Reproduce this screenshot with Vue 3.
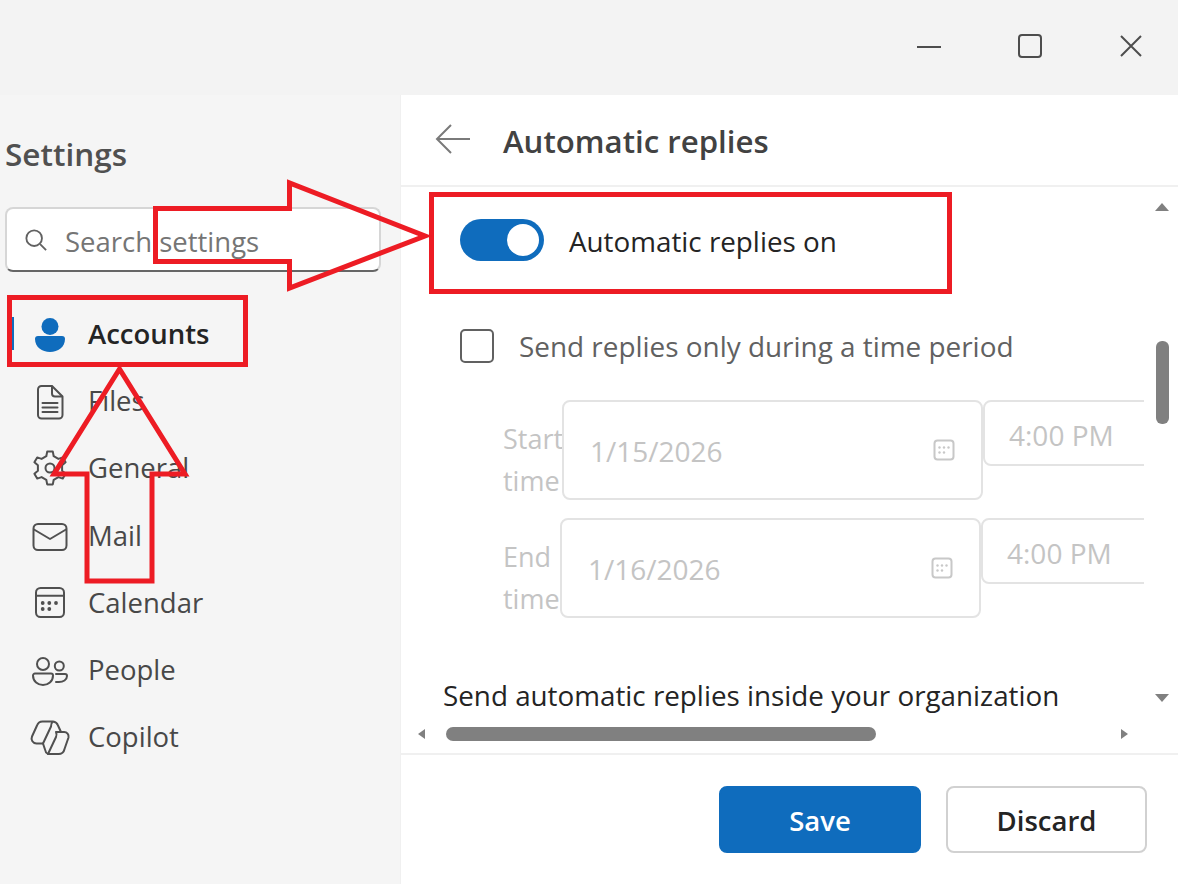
<script setup>
const navItems = [
  { id: "accounts", label: "Accounts" },
  { id: "files", label: "Files" },
  { id: "general", label: "General" },
  { id: "mail", label: "Mail" },
  { id: "calendar", label: "Calendar" },
  { id: "people", label: "People" },
  { id: "copilot", label: "Copilot" },
];

const dateRows = [
  { label: "Start time", date: "1/15/2026", time: "4:00 PM", labelWidth: 59 },
  { label: "End time", date: "1/16/2026", time: "4:00 PM", labelWidth: 57 },
];

// gear outline, six rounded teeth
function gearPath() {
  const pts = [];
  for (let i = 0; i < 6; i++) {
    const a = (Math.PI / 3) * i - Math.PI / 2;
    const teeth = [
      [-0.3, 12.4],
      [-0.17, 16.6],
      [0.17, 16.6],
      [0.3, 12.4],
    ];
    for (const [off, r] of teeth) {
      pts.push(
        (18 + r * Math.cos(a + off)).toFixed(1) + " " + (18 + r * Math.sin(a + off)).toFixed(1)
      );
    }
  }
  return "M" + pts.join("L") + "Z";
}
const gear = gearPath();
</script>

<template>
  <div class="window">
    <header class="titlebar">
      <svg class="win-icon" viewBox="0 0 26 26"><path d="M1 14h24" /></svg>
      <svg class="win-icon" viewBox="0 0 26 26"><rect x="2" y="2" width="22" height="22" rx="3" /></svg>
      <svg class="win-icon" viewBox="0 0 26 26"><path d="M3 3l20 20M23 3L3 23" /></svg>
    </header>

    <div class="body">
      <aside class="sidebar">
        <h1 class="settings-title">Settings</h1>
        <div class="search">
          <svg class="search-icon" viewBox="0 0 24 24">
            <circle cx="10" cy="10" r="8.5" />
            <path d="M16.5 16.5L23 23" />
          </svg>
          <span class="search-text">Search settings</span>
        </div>

        <nav class="nav">
          <div
            v-for="item in navItems"
            :key="item.id"
            class="nav-item"
            :class="{ active: item.id === 'accounts' }"
          >
            <span v-if="item.id === 'accounts'" class="indicator"></span>
            <svg class="nav-icon" viewBox="0 0 36 36">
              <g v-if="item.id === 'accounts'" class="filled">
                <circle cx="18" cy="10.500" r="8.500" />
                <path d="M3 23a3 3 0 0 1 3-3h24a3 3 0 0 1 3 3c0 8-7 13-15 13S3 31 3 23z" />
              </g>
              <g v-else-if="item.id === 'files'">
                <path d="M9.500 3h10.500l10.500 10.500v18.500a3.500 3.500 0 0 1-3.500 3.500h-17.500a3.500 3.500 0 0 1-3.500-3.500v-25.500a3.500 3.500 0 0 1 3.500-3.500z" />
                <path d="M20 3.500v7a3 3 0 0 0 3 3h7M10.500 20h15M10.500 24.500h15M10.500 29h15" />
              </g>
              <g v-else-if="item.id === 'general'">
                <path :d="gear" />
                <circle cx="18" cy="18" r="4.500" />
              </g>
              <g v-else-if="item.id === 'mail'">
                <rect x="1.500" y="7" width="33" height="26" rx="4.500" />
                <path d="M2 12.500l16 9.500 16-9.500" />
              </g>
              <g v-else-if="item.id === 'calendar'">
                <rect x="4" y="4" width="28" height="29" rx="4.500" />
                <path d="M4 11.700h28" />
                <g class="filled">
                  <circle cx="10.700" cy="19" r="1.900" />
                  <circle cx="17.300" cy="19" r="1.900" />
                  <circle cx="24" cy="19" r="1.900" />
                  <circle cx="10.700" cy="25" r="1.900" />
                  <circle cx="17.300" cy="25" r="1.900" />
                </g>
              </g>
              <g v-else-if="item.id === 'people'">
                <circle cx="11" cy="12" r="6" />
                <circle cx="27.300" cy="14" r="4.500" />
                <path d="M3 21.500h16a2 2 0 0 1 2 2c0 6-5 9.500-10 9.500s-10-3.500-10-9.500a2 2 0 0 1 2-2z" />
                <path d="M24 22h9a2 2 0 0 1 2 2c0 4-4 6-8 6h-3" />
              </g>
              <g v-else>
                <path d="M21 2.500H11a6 6 0 0 0-6 4L0 17.500a5 5 0 0 0 4.500 7H11l8-17a6 6 0 0 1 2-5a6 6 0 0 1 5 4L29 13" />
                <path d="M24 13h8a4.500 4.500 0 0 1 4.500 5.500L32.500 30a6 6 0 0 1-6 5H16l8-17a6 6 0 0 0 0-5" />
                <path d="M11 24.500l2 6a6 6 0 0 0 3 4.500" />
              </g>
            </svg>
            <span class="nav-label">{{ item.label }}</span>
          </div>
        </nav>
      </aside>

      <main class="pane">
        <div class="pane-head">
          <svg class="back" viewBox="0 0 36 32">
            <path d="M35 16H2M16 2L2 16l14 14" />
          </svg>
          <h2 class="pane-title">Automatic replies</h2>
        </div>

        <div class="scroll-area">
          <div class="scroll-col">
            <div class="viewport">
              <div class="toggle-row">
                <span class="toggle"><span class="knob"></span></span>
                <span class="toggle-label">Automatic replies on</span>
              </div>

              <div class="check-row">
                <span class="checkbox"></span>
                <span class="check-label">Send replies only during a time period</span>
              </div>

              <div v-for="row in dateRows" :key="row.label" class="date-row">
                <span class="date-label" :style="{ width: row.labelWidth + 'px' }">{{ row.label }}</span>
                <div class="date-input">
                  <span>{{ row.date }}</span>
                  <svg class="date-icon" viewBox="0 0 22 22">
                    <rect x="1.500" y="1.500" width="19" height="19" rx="3" />
                    <g class="dots">
                      <circle cx="6.500" cy="8.500" r="1.200" />
                      <circle cx="11" cy="8.500" r="1.200" />
                      <circle cx="15.500" cy="8.500" r="1.200" />
                      <circle cx="6.500" cy="13.500" r="1.200" />
                      <circle cx="11" cy="13.500" r="1.200" />
                    </g>
                  </svg>
                </div>
                <div class="time-input">{{ row.time }}</div>
              </div>

              <div class="section-title">Send automatic replies inside your organization</div>
            </div>

            <div class="hbar">
              <span class="arrow arrow-left"></span>
              <span class="hthumb"></span>
              <span class="arrow arrow-right"></span>
            </div>
          </div>

          <div class="vbar">
            <span class="arrow arrow-up"></span>
            <span class="vthumb"></span>
            <span class="arrow arrow-down"></span>
          </div>
        </div>

        <footer class="pane-foot">
          <button class="btn btn-primary">Save</button>
          <button class="btn">Discard</button>
        </footer>
      </main>
    </div>

    <!-- annotations drawn over the screenshot -->
    <svg class="marks" viewBox="0 0 1178 884">
      <rect x="431.500" y="194.500" width="518" height="97" />
      <rect x="9.500" y="297.500" width="236" height="67" />
      <path d="M155.500 208.500H289.500V183L425 236 289.500 288V261.500H155.500Z" />
      <path d="M119.500 369L54 474H87V581H152V474H185Z" />
    </svg>
  </div>
</template>

<style scoped>
.window {
  position: relative;
  width: 1178px;
  height: 884px;
  overflow: hidden;
  display: flex;
  flex-direction: column;
  background: #f3f3f3;
  font-family: "Open Sans", "Noto Sans", sans-serif;
  color: #424242;
}

.titlebar {
  height: 95px;
  flex: none;
  display: flex;
  justify-content: flex-end;
  align-items: center;
  gap: 75px;
  padding: 0 34px 3px 0;
  box-sizing: border-box;
}

.win-icon {
  width: 26px;
  height: 26px;
  fill: none;
  stroke: #4d4d4d;
  stroke-width: 2;
}

.body {
  flex: 1;
  display: flex;
  min-height: 0;
}

.sidebar {
  width: 400px;
  flex: none;
  background: #f5f5f5;
  padding: 0 19px 0 5px;
  box-sizing: border-box;
}

.settings-title {
  margin: 36px 0 31px;
  font-size: 31.500px;
  line-height: 45px;
  font-weight: 600;
  color: #505050;
}

.search {
  height: 65px;
  box-sizing: border-box;
  display: flex;
  align-items: center;
  gap: 18px;
  padding: 0 18px;
  background: #fff;
  border: 2px solid #d6d6d6;
  border-bottom-color: #666;
  border-radius: 8px;
}

.search-icon {
  width: 22px;
  height: 22px;
  flex: none;
  fill: none;
  stroke: #616161;
  stroke-width: 2;
}

.search-text {
  padding-top: 3px;
  font-size: 27.500px;
  color: #757575;
}

.nav {
  margin-top: 28px;
  display: flex;
  flex-direction: column;
}

.nav-item {
  position: relative;
  height: 67.200px;
  display: flex;
  align-items: center;
  gap: 20px;
  padding-left: 27px;
  font-size: 27.500px;
  color: #484848;
}

.nav-item.active {
  font-weight: 600;
  color: #242424;
}

.indicator {
  position: absolute;
  left: 7px;
  top: 17px;
  width: 2px;
  height: 33px;
  background: #0f6cbd;
}

.nav-icon {
  width: 36px;
  height: 36px;
  flex: none;
  overflow: visible;
  fill: none;
  stroke: #505050;
  stroke-width: 2;
  stroke-linejoin: round;
  stroke-linecap: round;
}

.nav-icon .filled {
  fill: #505050;
  stroke: none;
}

.active .nav-icon .filled {
  fill: #0f6cbd;
}

.pane {
  flex: 1;
  min-width: 0;
  display: flex;
  flex-direction: column;
  background: #fff;
  border-left: 1px solid #f0f0f0;
}

.pane-head {
  height: 92px;
  flex: none;
  box-sizing: border-box;
  display: flex;
  align-items: center;
  gap: 32px;
  padding: 2px 0 0 34px;
  border-bottom: 2px solid #f0f0f0;
}

.back {
  width: 36px;
  height: 32px;
  margin-top: -4px;
  fill: none;
  stroke: #7a7a7a;
  stroke-width: 2;
}

.pane-title {
  margin: 0;
  font-size: 31.200px;
  font-weight: 600;
  color: #424242;
}

.scroll-area {
  height: 566px;
  flex: none;
  display: flex;
}

.scroll-col {
  width: 743px;
  flex: none;
  display: flex;
  flex-direction: column;
}

.viewport {
  height: 538px;
  flex: none;
  overflow: hidden;
}

.toggle-row {
  display: flex;
  align-items: center;
  gap: 25px;
  margin-top: 32px;
  padding-left: 59px;
  height: 42px;
}

.toggle {
  width: 84px;
  height: 42px;
  flex: none;
  box-sizing: border-box;
  display: flex;
  align-items: center;
  justify-content: flex-end;
  padding-right: 5px;
  border-radius: 21px;
  background: #0f6cbd;
}

.knob {
  width: 32px;
  height: 32px;
  border-radius: 50%;
  background: #fff;
}

.toggle-label {
  padding-top: 2px;
  font-size: 27.800px;
  color: #242424;
  white-space: nowrap;
}

.check-row {
  display: flex;
  align-items: center;
  gap: 25px;
  margin-top: 68px;
  padding-left: 59px;
  height: 34px;
}

.checkbox {
  width: 34px;
  height: 34px;
  flex: none;
  box-sizing: border-box;
  border: 2px solid #616161;
  border-radius: 5px;
}

.check-label {
  font-size: 27.900px;
  color: #616161;
  white-space: nowrap;
}

.date-row {
  display: flex;
  align-items: flex-start;
  margin-top: 18px;
  padding-left: 102px;
  font-size: 28px;
  color: #bdbdbd;
}

.check-row + .date-row {
  margin-top: 37px;
}

.date-label {
  flex: none;
  height: 100px;
  box-sizing: border-box;
  padding-top: 18px;
  line-height: 42px;
  font-size: 27px;
  color: #c4c4c4;
}

.date-input {
  width: 421px;
  height: 100px;
  flex: none;
  box-sizing: border-box;
  display: flex;
  align-items: center;
  justify-content: space-between;
  padding: 2px 26px 0 26px;
  border: 2px solid #e3e3e3;
  border-radius: 8px;
  color: #c4c4c4;
}

.date-icon {
  width: 22px;
  height: 22px;
  margin-top: -2px;
  flex: none;
  fill: none;
  stroke: #c8c8c8;
  stroke-width: 2;
}

.date-icon .dots {
  fill: #c8c8c8;
  stroke: none;
}

.time-input {
  width: 200px;
  height: 66px;
  flex: none;
  box-sizing: border-box;
  display: flex;
  align-items: center;
  padding: 3px 0 0 24px;
  border: 2px solid #e3e3e3;
  border-radius: 8px;
  color: #c4c4c4;
}

.section-title {
  margin-top: 58px;
  padding-left: 42px;
  font-size: 27.800px;
  color: #242424;
  white-space: nowrap;
}

.hbar {
  flex: 1;
  display: flex;
  align-items: center;
  padding: 0 0 10px 17px;
}

.hthumb {
  width: 430px;
  height: 14px;
  margin-left: 21px;
  border-radius: 7px;
  background: #808080;
}

.arrow {
  flex: none;
  width: 0;
  height: 0;
  border: 0 solid transparent;
}

.arrow-left {
  border-width: 5px 7px 5px 0;
  border-right-color: #808080;
}

.arrow-right {
  margin-left: auto;
  margin-right: 16px;
  border-width: 5px 0 5px 7px;
  border-left-color: #808080;
}

.vbar {
  flex: 1;
  display: flex;
  flex-direction: column;
  align-items: center;
  box-sizing: border-box;
  padding: 16px 0 51px 2px;
}

.arrow-up {
  border-width: 0 7px 8px;
  border-bottom-color: #808080;
}

.arrow-down {
  margin-top: auto;
  border-width: 8px 7px 0;
  border-top-color: #808080;
}

.vthumb {
  width: 13px;
  height: 83px;
  margin-top: 130px;
  border-radius: 6px;
  background: #808080;
}

.pane-foot {
  flex: 1;
  display: flex;
  justify-content: flex-end;
  align-items: flex-start;
  gap: 25px;
  padding: 31px 31px 0 0;
  border-top: 2px solid #f0f0f0;
}

.btn {
  width: 201px;
  height: 67px;
  box-sizing: border-box;
  padding-top: 3px;
  font: 600 27.500px "Open Sans", "Noto Sans", sans-serif;
  color: #242424;
  background: #fff;
  border: 2px solid #d1d1d1;
  border-radius: 8px;
}

.btn-primary {
  width: 202px;
  color: #fff;
  background: #0f6cbd;
  border-color: #0f6cbd;
}

.marks {
  position: absolute;
  left: 0;
  top: 0;
  width: 1178px;
  height: 884px;
  fill: none;
  stroke: #ed1c24;
  stroke-width: 5;
  pointer-events: none;
}
</style>

<style>
html,
body {
  margin: 0;
  overflow: hidden;
}
</style>
